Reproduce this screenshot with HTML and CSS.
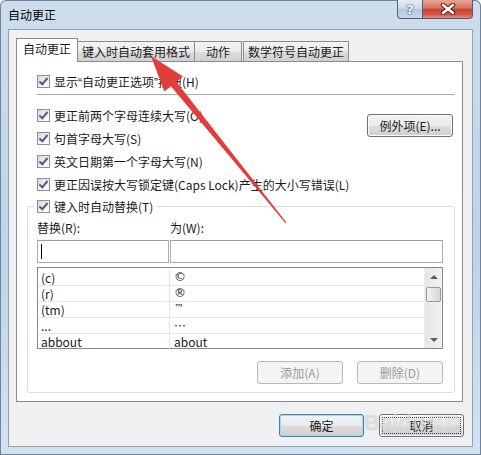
FILE: index.html
```html
<!DOCTYPE html>
<html lang="zh-CN">
<head>
    <meta charset="UTF-8">
    <title>自动更正</title>
    <link rel="stylesheet" href="styles.css">
</head>
<body>
    <div class="window">
        <div class="titlebar">
            <span class="title">自动更正</span>
            <div class="caption">
                <span class="cap-btn help">?</span>
                <span class="cap-btn close">
                    <svg width="16" height="12" viewBox="0 0 16 12">
                        <path d="M3 2 L13 10 M13 2 L3 10" stroke="#4a1a12" stroke-width="4.5" stroke-linecap="round"/>
                        <path d="M3 2 L13 10 M13 2 L3 10" stroke="#fff" stroke-width="2.6" stroke-linecap="round"/>
                    </svg>
                </span>
            </div>
        </div>

        <div class="client">
            <div class="tabs">
                <span class="tab active">自动更正</span>
                <span class="tab">键入时自动套用格式</span>
                <span class="tab tab-short">动作</span>
                <span class="tab tab-gap">数学符号自动更正</span>
            </div>

            <div class="panel">
                <label class="check top-check"><span class="box"></span><span>显示<span class="quote">“</span>自动更正选项<span class="quote">”</span>按钮(H)</span></label>
                <div class="sep"></div>

                <div class="options">
                    <div class="option-list">
                        <label class="check"><span class="box"></span><span>更正前两个字母连续大写(O)</span></label>
                        <label class="check"><span class="box"></span><span>句首字母大写(S)</span></label>
                        <label class="check"><span class="box"></span><span>英文日期第一个字母大写(N)</span></label>
                        <label class="check"><span class="box"></span><span>更正因误按大写锁定键(Caps Lock)产生的大小写错误(L)</span></label>
                    </div>
                    <button class="btn exceptions">例外项(E)...</button>
                </div>

                <fieldset class="group">
                    <legend><label class="check legend-check"><span class="box"></span><span>键入时自动替换(T)</span></label></legend>
                    <div class="pair labels"><span>替换(R):</span><span>为(W):</span></div>
                    <div class="pair inputs">
                        <div class="field"><span class="caret"></span></div>
                        <div class="field"></div>
                    </div>
                    <div class="list">
                        <div class="rows">
                            <div class="row"><span class="col-a">(c)</span><span class="col-b sym">©</span></div>
                            <div class="row"><span class="col-a">(r)</span><span class="col-b sym">®</span></div>
                            <div class="row"><span class="col-a">(tm)</span><span class="col-b sym tm">™</span></div>
                            <div class="row"><span class="col-a">...</span><span class="col-b">…</span></div>
                            <div class="row last"><span class="col-a">abbout</span><span class="col-b">about</span></div>
                        </div>
                        <div class="scrollbar">
                            <span class="arrow-box"><span class="arrow up"></span></span>
                            <span class="thumb"></span>
                            <span class="arrow-box bottom"><span class="arrow down"></span></span>
                        </div>
                    </div>
                    <div class="group-actions">
                        <button class="btn" disabled>添加(A)</button>
                        <button class="btn" disabled>删除(D)</button>
                    </div>
                </fieldset>
            </div>

            <div class="footer">
                <button class="btn default">确定</button>
                <button class="btn focused">取消</button>
            </div>
        </div>

        <!-- red annotation arrow drawn over the dialog -->
        <svg class="annotation" width="481" height="455" viewBox="0 0 481 455">
            <polygon points="151,56 183,76.5 176.3,81.8 286.5,222.6 285.6,223.2 170.9,86.2 164.3,91.5" fill="#e33d3a"/>
        </svg>

        <div class="watermark">Bai<b>du</b><span>经验</span></div>
    </div>
</body>
</html>
```

FILE: styles.css
```css
body {
    margin: 0;
    font-family: "Noto Sans CJK SC", "Microsoft YaHei", sans-serif;
    font-size: 12px;
    color: #1a1a1a;
}
.window {
    position: relative;
    width: 481px;
    height: 455px;
    box-sizing: border-box;
    padding: 0 8px 8px;
    display: flex;
    flex-direction: column;
    background: linear-gradient(180deg, #cddded 0%, #bed3e8 55%, #d3e2f1 100%);
    border-radius: 6px 6px 0 0;
    box-shadow: inset 0 0 0 1px #70859d;
    overflow: hidden;
}
.titlebar {
    height: 29px;
    flex: none;
    display: flex;
    justify-content: space-between;
    align-items: flex-start;
}
.title {
    line-height: 29px;
    color: #000;
}
.caption {
    display: flex;
}
.cap-btn {
    height: 19px;
    box-sizing: border-box;
    border: 1px solid #4e6078;
    border-top: none;
    display: flex;
    align-items: center;
    justify-content: center;
}
.help {
    width: 26px;
    border-radius: 0 0 0 4px;
    background: linear-gradient(#e6edf5, #ccd9e8 48%, #b4c6da 52%, #c8d8e9);
    color: #fff;
    font: bold 13px "DejaVu Sans", sans-serif;
    text-shadow: 0 0 1px #2d3f57, 0 0 2px #2d3f57;
}
.close {
    width: 50px;
    border-left: none;
    border-radius: 0 0 4px 0;
    background: linear-gradient(#eaa595, #d87462 45%, #c3412d 52%, #d25a46 80%, #e38f7a);
}
.client {
    flex: 1;
    display: flex;
    flex-direction: column;
    background: #f0f0f0;
    border: 1px solid #8ea2b8;
    padding: 8px 9px 9px 7px;
}

/* tabs */
.tabs {
    display: flex;
    align-items: flex-end;
    height: 23px;
    flex: none;
}
.tab {
    height: 20px;
    box-sizing: border-box;
    padding: 0 4px;
    border: 1px solid #898c95;
    border-bottom: none;
    margin-left: -1px;
    line-height: 19px;
    background: linear-gradient(#f3f3f3, #ebebeb 50%, #dddddd 51%, #d0d0d0);
}
.tab.active {
    height: 24px;
    margin: 0 0 -1px;
    padding: 0 6px;
    line-height: 20px;
    background: #fff;
    position: relative;
    z-index: 1;
}
.tab-short {
    padding: 0 11px;
}
.tab-gap {
    margin-left: 1px;
}
.panel {
    background: #fff;
    border: 1px solid #898c95;
    padding: 10px 7px 0 10px;
}

/* checkboxes */
.check {
    display: flex;
    align-items: center;
    gap: 4px;
    height: 23px;
    margin-left: 10px;
    white-space: nowrap;
}
.top-check,
.legend-check {
    height: 18px;
}
.legend-check {
    margin-left: 0;
}
.quote {
    font-family: "Liberation Sans", sans-serif;
}
.box {
    flex: none;
    width: 13px;
    height: 13px;
    box-sizing: border-box;
    border: 1px solid #8e8f8f;
    background: linear-gradient(135deg, #d8d8d8, #f6f6f6 70%, #fff);
    position: relative;
}
.box::after {
    content: "";
    position: absolute;
    left: 3px;
    top: 0px;
    width: 3px;
    height: 7px;
    border: solid #4a5f8a;
    border-width: 0 2px 2px 0;
    transform: rotate(40deg);
}
.sep {
    height: 1px;
    background: #aaaaaa;
    margin: 4px 0 9px 10px;
}
.options {
    display: flex;
    justify-content: space-between;
    align-items: flex-start;
}

/* buttons */
.btn {
    font: inherit;
    height: 23px;
    box-sizing: border-box;
    padding: 0;
    border: 1px solid #707070;
    border-radius: 3px;
    color: #1a1a1a;
    background: linear-gradient(#f2f2f2, #ebebeb 50%, #dddddd 51%, #cfcfcf);
    box-shadow: inset 0 0 0 1px #fbfbfb;
}
.btn:disabled {
    color: #9a9a9a;
    border-color: #b5b9bc;
    background: #f4f4f4;
    box-shadow: none;
}
.exceptions {
    width: 86px;
    margin: 10px 2px 0 0;
}

/* replace group */
.group {
    margin: 1px 0 8px;
    padding: 0 11px 8px 9px;
    border: 1px solid #d5dfe5;
    border-radius: 3px;
    min-width: 0;
}
.group legend {
    padding: 0 3px;
    margin-left: -3px;
}
.pair {
    display: grid;
    grid-template-columns: 132px 1fr;
    gap: 1px;
}
.labels {
    margin-top: 4px;
    line-height: 18px;
}
.inputs {
    margin-top: 3px;
}
.field {
    height: 23px;
    box-sizing: border-box;
    border: 1px solid #a9abb0;
    border-top-color: #9b9da2;
    background: #fff;
    padding-left: 3px;
    display: flex;
    align-items: center;
}
.caret {
    width: 1px;
    height: 15px;
    background: #000;
}
.list {
    margin-top: 4px;
    height: 82px;
    box-sizing: border-box;
    border: 1px solid #828790;
    display: flex;
    background: #fff;
}
.rows {
    flex: 1;
    padding-top: 2px;
}
.row {
    display: grid;
    grid-template-columns: 132px 1fr;
    height: 16px;
    box-sizing: border-box;
    border-bottom: 1px solid #e6e6e6;
    line-height: 15px;
    overflow: hidden;
}
.row.last {
    border-bottom: none;
}
.col-a {
    padding-left: 3px;
    border-right: 1px solid #e6e6e6;
}
.col-b {
    padding-left: 4px;
}
.sym {
    font-family: "DejaVu Sans", sans-serif;
    font-size: 12px;
}
.tm {
    font-size: 10px;
    line-height: 11px;
}
.scrollbar {
    width: 17px;
    display: flex;
    flex-direction: column;
    align-items: center;
    background: linear-gradient(90deg, #e6e6e6, #f3f3f3);
    border-left: 1px solid #ececec;
}
.arrow-box {
    height: 17px;
    width: 100%;
    display: flex;
    align-items: center;
    justify-content: center;
}
.arrow-box.bottom {
    margin-top: auto;
}
.arrow {
    width: 0;
    height: 0;
    border-left: 4px solid transparent;
    border-right: 4px solid transparent;
}
.arrow.up {
    border-bottom: 4px solid #5a5a5a;
}
.arrow.down {
    border-top: 4px solid #5a5a5a;
}
.thumb {
    width: 15px;
    height: 15px;
    margin-top: 2px;
    box-sizing: border-box;
    border: 1px solid #979797;
    border-radius: 2px;
    background: linear-gradient(90deg, #f6f6f6, #e4e4e4 50%, #d6d6d6);
}
.group-actions {
    display: flex;
    justify-content: flex-end;
    gap: 14px;
    margin-top: 12px;
}
.group-actions .btn {
    width: 86px;
}

/* dialog buttons */
.footer {
    display: flex;
    justify-content: flex-end;
    gap: 15px;
    margin: 12px -1px 0 0;
}
.footer .btn {
    width: 85px;
}
.btn.default {
    border-color: #3c7fb1;
    box-shadow: inset 0 0 0 1px #a9d5f0;
}
.btn.focused {
    outline: 1px dotted #444;
    outline-offset: -4px;
}

/* overlays */
.annotation {
    position: absolute;
    left: 0;
    top: 0;
    pointer-events: none;
}
.watermark {
    position: absolute;
    left: 364px;
    top: 410px;
    font: bold 22px "Liberation Sans", sans-serif;
    color: rgba(255, 255, 255, 0.5);
    text-shadow: 0 0 1px rgba(110, 110, 110, 0.4);
    pointer-events: none;
}
.watermark span {
    font: 17px "Noto Sans CJK SC", sans-serif;
    margin-left: 2px;
}
```
